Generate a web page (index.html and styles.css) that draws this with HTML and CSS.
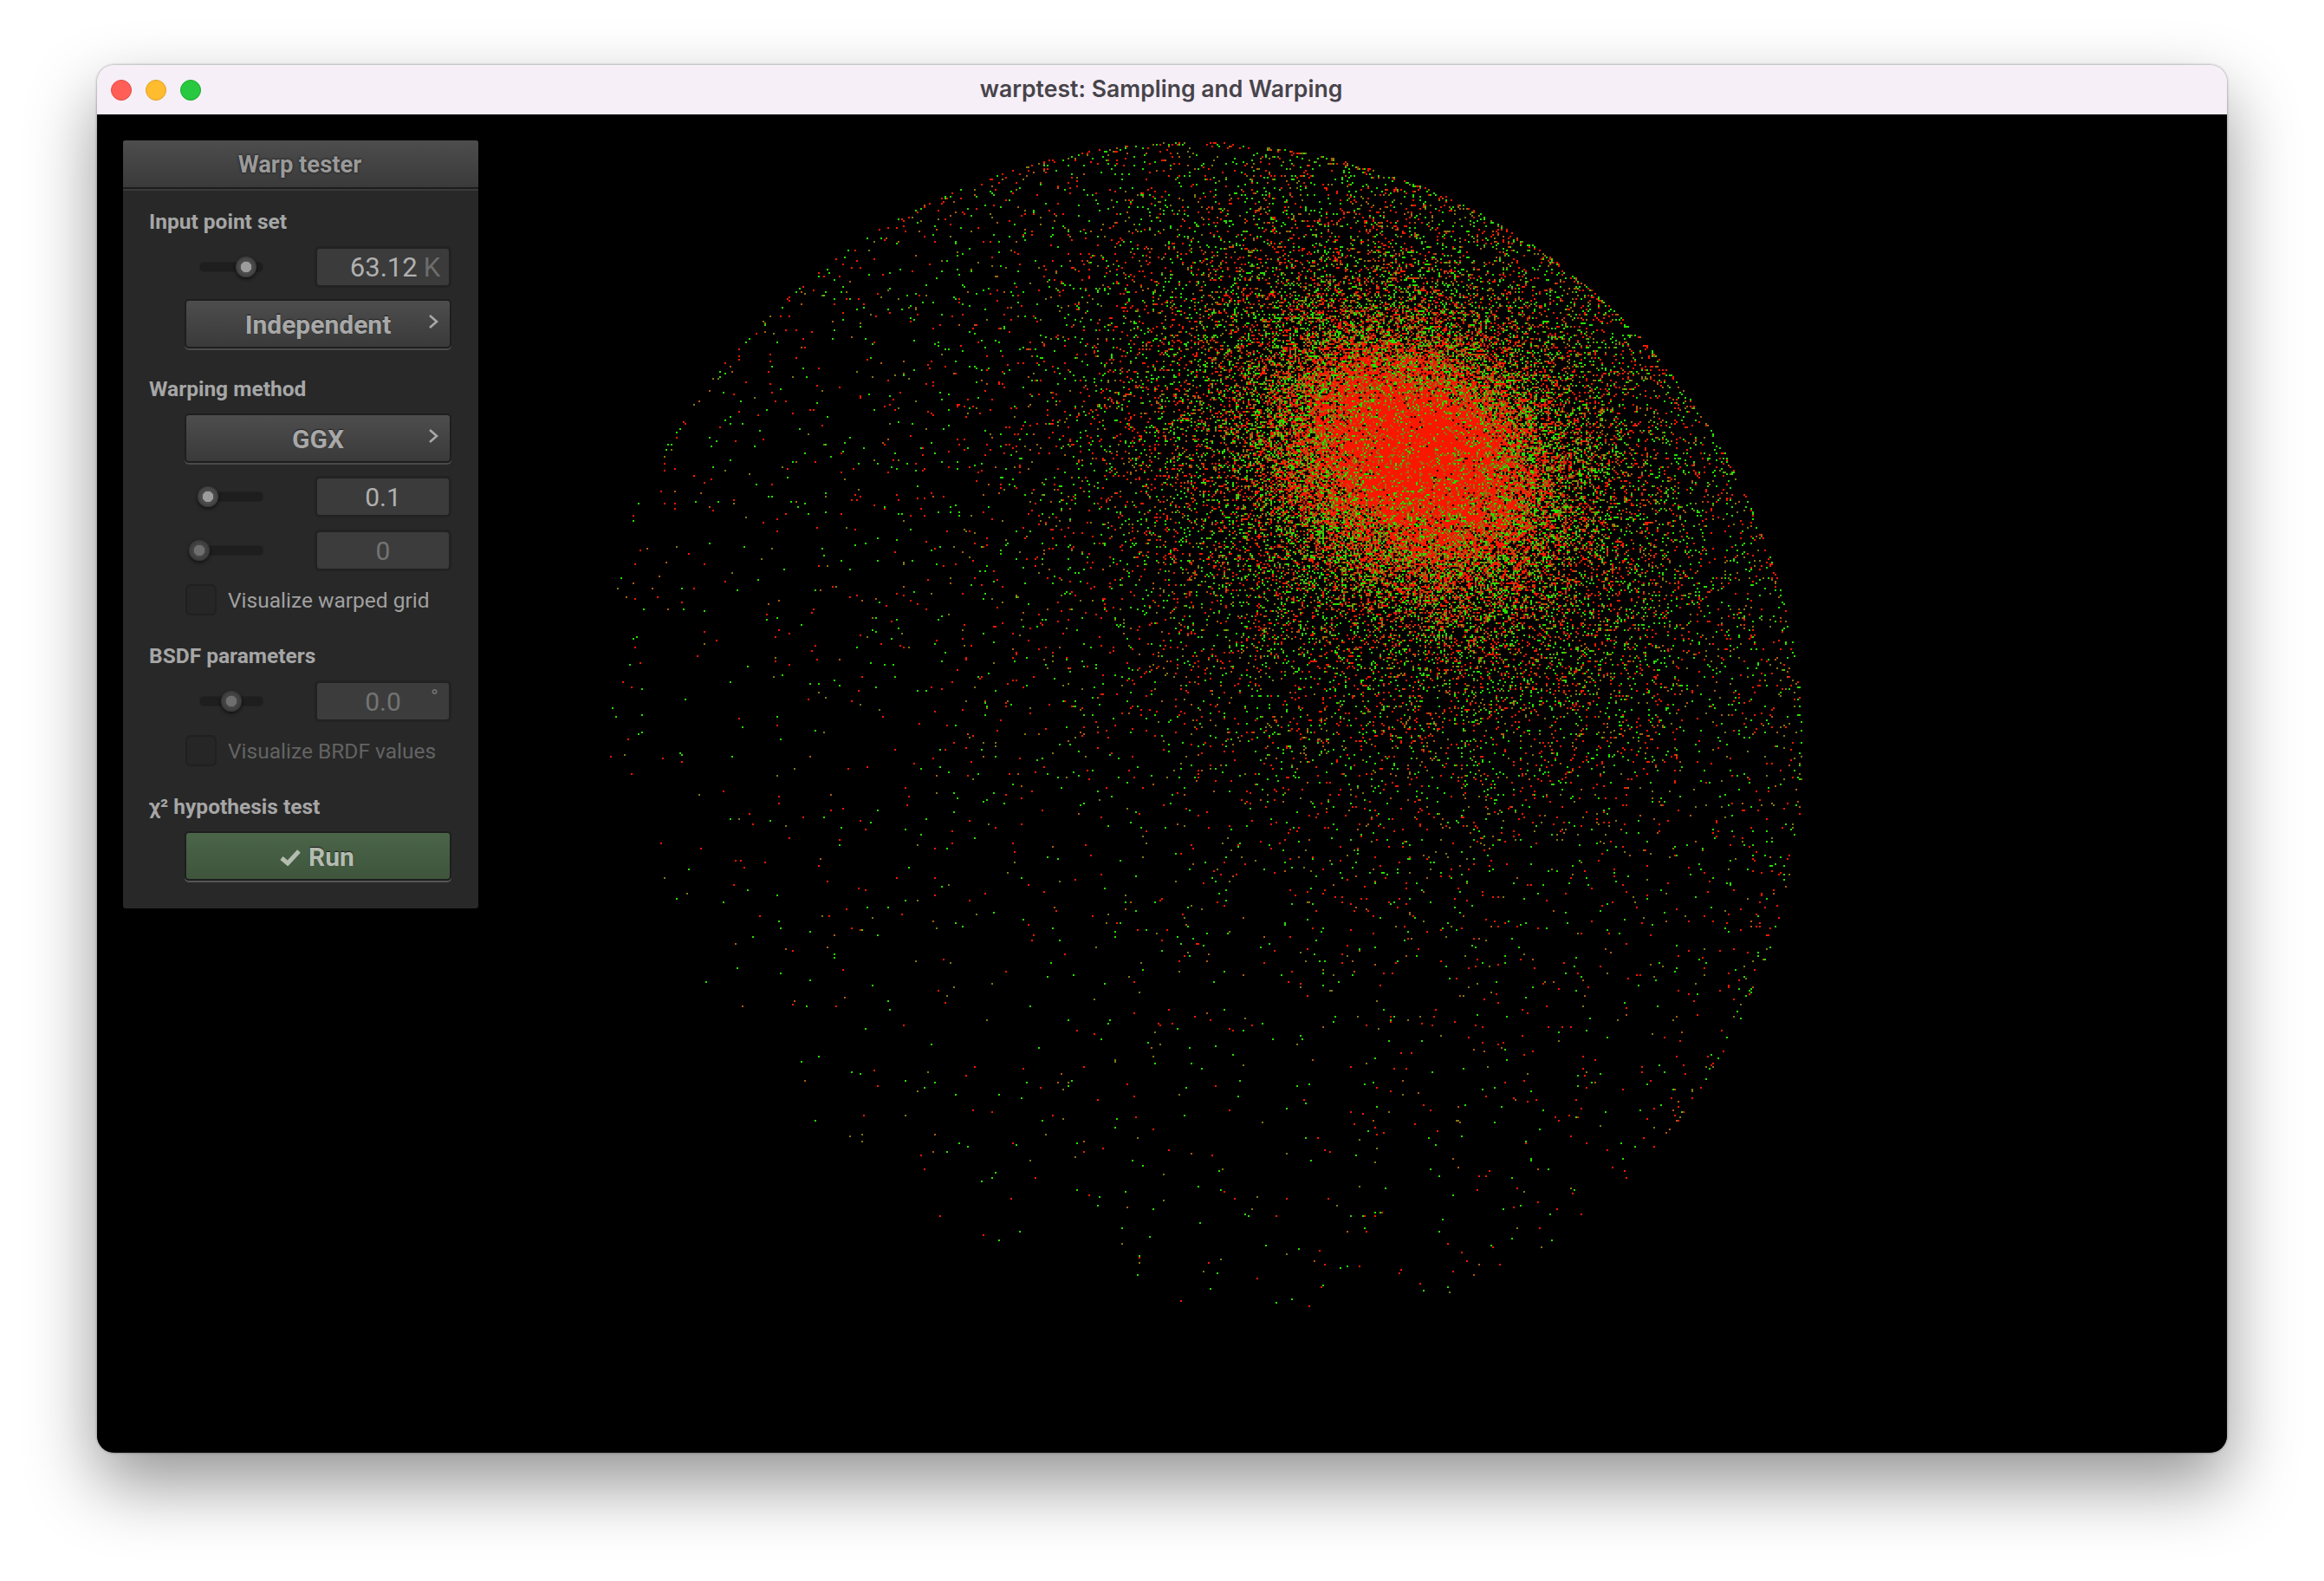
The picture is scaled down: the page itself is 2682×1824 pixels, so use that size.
FILE: index.html
```html
<!DOCTYPE html>
<html lang="en">
<head>
    <meta charset="UTF-8">
    <meta name="viewport" content="width=device-width, initial-scale=1.0">
    <title>warptest: Sampling and Warping</title>
    <link rel="stylesheet" href="styles.css">
</head>
<body>

    <div class="window">
        <div class="titlebar">
            <div class="lights">
                <span class="light red"></span>
                <span class="light yellow"></span>
                <span class="light green"></span>
            </div>
            <div class="title">warptest: Sampling and Warping</div>
        </div>

        <div class="content">
            <canvas id="points" width="2458" height="1543"></canvas>

            <div class="panel">
                <div class="panel-head">Warp tester</div>
                <div class="panel-body">
                    <div class="label first">Input point set</div>
                    <div class="row">
                        <div class="slider"><span class="thumb" style="left: 54px"></span></div>
                        <div class="textbox"><span class="value right">63.12</span><span class="unit">K</span></div>
                    </div>
                    <div class="button gap-14">
                        <span>Independent</span>
                        <svg class="chevron" width="12" height="18" viewBox="0 0 12 18"><path d="M2 2l8 7-8 7" fill="none" stroke="#a8a8a8" stroke-width="2.6"/></svg>
                    </div>

                    <div class="label">Warping method</div>
                    <div class="button">
                        <span>GGX</span>
                        <svg class="chevron" width="12" height="18" viewBox="0 0 12 18"><path d="M2 2l8 7-8 7" fill="none" stroke="#a8a8a8" stroke-width="2.6"/></svg>
                    </div>
                    <div class="row gap-15">
                        <div class="slider"><span class="thumb" style="left: 10px"></span></div>
                        <div class="textbox"><span class="value">0.1</span></div>
                    </div>
                    <div class="row gap-14 dim">
                        <div class="slider"><span class="thumb" style="left: 0"></span></div>
                        <div class="textbox"><span class="value">0</span></div>
                    </div>
                    <div class="check gap-15">
                        <span class="box"></span>
                        <span>Visualize warped grid</span>
                    </div>

                    <div class="label">BSDF parameters</div>
                    <div class="row dim">
                        <div class="slider"><span class="thumb" style="left: 37px"></span></div>
                        <div class="textbox"><span class="value">0.0</span><span class="degree">°</span></div>
                    </div>
                    <div class="check gap-15 dim">
                        <span class="box"></span>
                        <span>Visualize BRDF values</span>
                    </div>

                    <div class="label">χ² hypothesis test</div>
                    <div class="button run">
                        <svg width="24" height="20" viewBox="0 0 24 20"><path d="M2 11l7 6L22 3" fill="none" stroke="#b4bcb0" stroke-width="5"/></svg>
                        <span>Run</span>
                    </div>
                </div>
            </div>
        </div>
    </div>

    <script src="points.js"></script>

</body>
</html>
```

FILE: styles.css
```css
html, body { margin: 0; height: 100%; background: white; }
body { padding: 75px 112px 148px; box-sizing: border-box; font-family: Roboto, sans-serif; overflow: hidden; }

body::before { content: ""; position: absolute; left: 112px; top: 75px; width: 2458px; height: 1601px; border-radius: 20px; box-shadow: 0 36px 80px rgba(0,0,0,.42), 0 0 3px rgba(0,0,0,.45); }
.window { position: relative; height: 100%; display: flex; flex-direction: column; border-radius: 20px; overflow: hidden; }

.titlebar { height: 57px; flex: none; display: flex; align-items: center; justify-content: center; position: relative; background: #f6eff8; }
.lights { position: absolute; left: 16px; top: 17px; display: flex; gap: 16px; }
.light { width: 24px; height: 24px; border-radius: 50%; box-sizing: border-box; border: 1px solid; }
.red { background: #ff5f57; border-color: #e14942; }
.yellow { background: #febc2e; border-color: #dfa023; }
.green { background: #28c840; border-color: #1aab29; }
.title { font-family: Inter, sans-serif; font-weight: 600; font-size: 26.6px; color: #47444a; margin-top: -3px; padding-right: 2px; }

.content { flex: 1; position: relative; background: black; }
#points { display: block; }

.panel { position: absolute; left: 30px; top: 30px; width: 410px; height: 886px; background: #282828; border-radius: 3px; display: flex; flex-direction: column; }
.panel-head { height: 56px; box-sizing: border-box; padding: 2px 2px 0 0; flex: none; display: flex; align-items: center; justify-content: center; background: linear-gradient(#4d4d4d, #3a3a3a); border-bottom: 2px solid #1c1c1c; box-shadow: 0 2px 0 #3a3a3a; border-radius: 3px 3px 0 0; color: #9a9a9a; font-size: 27.4px; font-weight: 700; text-shadow: 0 0 3px #111; }
.panel-body { padding: 4px 31px 0 30px; }

.label { height: 30px; line-height: 30px; margin-top: 32px; font-size: 24.5px; font-weight: 700; color: #a6a6a6; }
.label.first { margin-top: 19px; }

.row { display: flex; margin: 13px 0 0 41px; height: 48px; }
.gap-14 { margin-top: 14px; }
.gap-15 { margin-top: 15px; }

.slider { width: 150px; flex: none; position: relative; }
.slider::before { content: ""; position: absolute; left: 17px; top: 18px; width: 74px; height: 12px; background: #1e1e1e; border: 1px solid #222; border-radius: 5px; box-sizing: border-box; }
.thumb { position: absolute; top: 12px; width: 24px; height: 24px; margin-left: 5px; border-radius: 50%; background: radial-gradient(circle, #9c9c9c 0 6px, #505050 6.5px, #3c3c3c 12px); box-shadow: 0 2px 4px rgba(0,0,0,.6); z-index: 1; }

.textbox { width: 158px; height: 48px; box-sizing: border-box; border: 3px solid #222; border-radius: 6px; background: #3b3b3b; display: flex; align-items: center; justify-content: center; position: relative; color: #b0b0b0; font-size: 30px; }
.value.right { margin-left: 28px; margin-right: 7px; font-size: 31px; }
.unit { color: #6c6c6c; font-size: 31px; }
.degree { position: absolute; right: 12px; top: 2px; font-size: 24px; }

.button { margin-left: 41px; width: 308px; height: 57px; box-sizing: border-box; border: 2px solid #1e1e1e; border-radius: 5px; background: linear-gradient(#4d4d4d, #3a3a3a); box-shadow: 0 2px 0 #4a4a4a; display: flex; align-items: center; justify-content: center; gap: 9px; position: relative; margin-top: 13px; padding-top: 2px; color: #a8a8a8; font-size: 30px; font-weight: 700; text-shadow: 0 -1px 1px #1a1a1a; }
.chevron { position: absolute; right: 13px; top: 15px; }
.run { background: linear-gradient(#4b6549, #3e553c); color: #b4bcb0; box-shadow: 0 2px 0 #555; padding-right: 2px; }

.check { display: flex; align-items: center; gap: 13px; margin-left: 42px; height: 36px; color: #a0a0a0; font-size: 24.5px; }
.box { width: 36px; height: 36px; box-sizing: border-box; background: #262626; border: 2px solid #202020; border-radius: 6px; flex: none; }

.dim .value, .dim .degree { color: #737373; }
.dim .thumb { background: radial-gradient(circle, #6e6e6e 0 6px, #484848 6.5px, #383838 12px); }
.dim.check { color: #636363; }
.dim .textbox { background: #3c3c3c; }
```

FILE: points.js
```js
// warped point cloud: dense lobe plus a wide tail, on a sphere seen at a tilt
const canvas = document.getElementById("points");
const ctx = canvas.getContext("2d");

let seed = 12345;
function rnd() {
    seed = (seed * 1664525 + 1013904223) >>> 0;
    return (seed >>> 8) / 16777216;
}

const cx = 1377 - 112, cy = 866 - 132, radius = 702;
const nx = 0.366, ny = 0.485, nz = Math.sqrt(1 - nx * nx - ny * ny);

// basis around the lobe direction
const ux = nz, uz = -nx;
const ulen = Math.hypot(ux, uz);
const ax = ux / ulen, ay = 0, az = uz / ulen;
const bx = ny * az - nz * ay, by = nz * ax - nx * az;

function gauss(sigma) {
    return sigma * Math.sqrt(-2 * Math.log(1 - rnd() * 0.9999));
}

function sampleTheta() {
    const pick = rnd();
    if (pick < 0.56) return gauss(0.115);
    if (pick < 0.85) return gauss(0.25);
    const u = rnd() * 0.985;
    return 1.3 * Math.atan(0.46 * Math.sqrt(u / (1 - u)));
}

const layers = [[], [], [], []];
for (let i = 0; i < 63120; i++) {
    const phi = rnd() * Math.PI * 2;
    const theta = sampleTheta();
    const st = Math.sin(theta), ct = Math.cos(theta);
    const l = st * Math.cos(phi), m = st * Math.sin(phi);
    const x = l * ax + m * bx + ct * nx;
    const y = l * ay + m * by + ct * ny;
    const c = rnd();
    layers[c < 0.38 ? 0 : c < 0.55 ? 1 : c < 0.63 ? 2 : 3].push([cx + x * radius, cy - y * radius]);
}

ctx.fillStyle = "#000";
ctx.fillRect(0, 0, canvas.width, canvas.height);
const colors = ["#26e000", "#827a10", "#b45a10", "#f81800"];
layers.forEach((pts, i) => {
    ctx.fillStyle = colors[i];
    pts.forEach(p => ctx.fillRect(Math.round(p[0] / 2) * 2, Math.round(p[1] / 2) * 2, 2, 2));
});
```
